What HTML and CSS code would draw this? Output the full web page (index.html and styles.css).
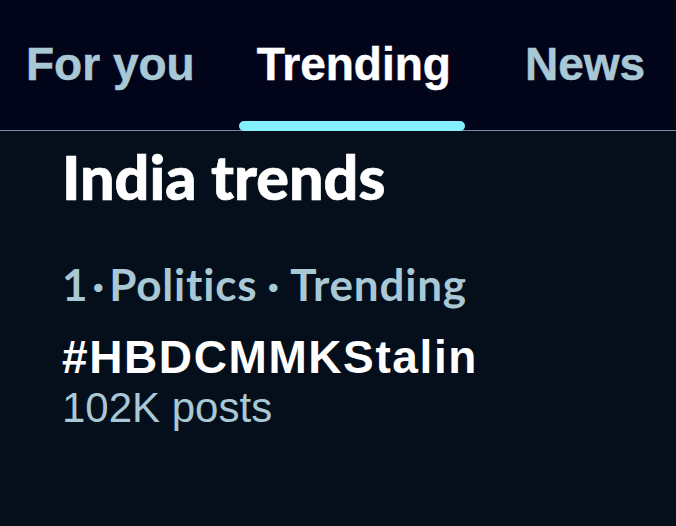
FILE: index.html
```html
<!DOCTYPE html>
<html lang="en">
<head>
<meta charset="utf-8">
<title>Trending</title>
<link rel="stylesheet" href="styles.css">
</head>
<body>
<div class="screen">
  <nav class="tabs">
    <div class="tab">For you</div>
    <div class="tab tab-active">Trending</div>
    <div class="tab tab-news">News</div>
  </nav>
  <main class="content">
    <h1 class="section-title">India trends</h1>
    <div class="trend">
      <div class="trend-meta">1<span class="sep">·</span>Politics<span class="sep sep-wide">·</span>Trending</div>
      <div class="trend-name">#HBDCMMKStalin</div>
      <div class="trend-count">102K posts</div>
    </div>
  </main>
</div>
</body>
</html>
```

FILE: styles.css
```css
* { box-sizing: border-box; }

html, body {
  margin: 0;
  padding: 0;
  background: #040f1b;
}

.screen {
  width: 676px;
  height: 526px;
  overflow: hidden;
  display: flex;
  flex-direction: column;
  background: #040f1b;
}

.tabs {
  display: flex;
  gap: 34px;
  padding-left: 12px;
  height: 131px;
  background: #02041a;
  border-bottom: 1px solid #7d8a99;
  white-space: nowrap;
}

.tab {
  position: relative;
  padding: 36px 14px 0;
  height: 130px;
  font-family: "Liberation Sans", Arial, sans-serif;
  font-weight: 700;
  font-size: 46px;
  line-height: 56px;
  -webkit-text-stroke: 0.5px currentColor;
  color: #a9c8d6;
}

.tab-news { margin-left: 12px; }

.tab-active { color: #ffffff; }

.tab-active::after {
  content: "";
  position: absolute;
  left: -4px;
  right: 0;
  bottom: -1px;
  height: 10px;
  border-radius: 5px;
  background: #84effd;
}

.content {
  padding: 10px 0 0 62px;
}

.section-title {
  margin: 0;
  font-family: Lato, "Open Sans", sans-serif;
  font-weight: 900;
  font-size: 61px;
  line-height: 72px;
  -webkit-text-stroke: 0.7px currentColor;
  color: #ffffff;
}

.trend {
  margin-top: 46px;
}

.trend-meta {
  font-family: Lato, "Open Sans", sans-serif;
  font-weight: 700;
  font-size: 44px;
  line-height: 50px;
  letter-spacing: 0.8px;
  font-variant-ligatures: none;
  color: #a9c8d6;
}

.sep { margin: 0 4px; }
.sep-wide { margin: 0 10px; }

.trend-name {
  margin-top: 22px;
  font-family: "Liberation Sans", Arial, sans-serif;
  font-weight: 700;
  font-size: 46px;
  line-height: 52px;
  letter-spacing: 1.6px;
  color: #ffffff;
}

.trend-count {
  font-family: "Liberation Sans", Arial, sans-serif;
  font-size: 42px;
  line-height: 50px;
  color: #a9c8d6;
}
```
